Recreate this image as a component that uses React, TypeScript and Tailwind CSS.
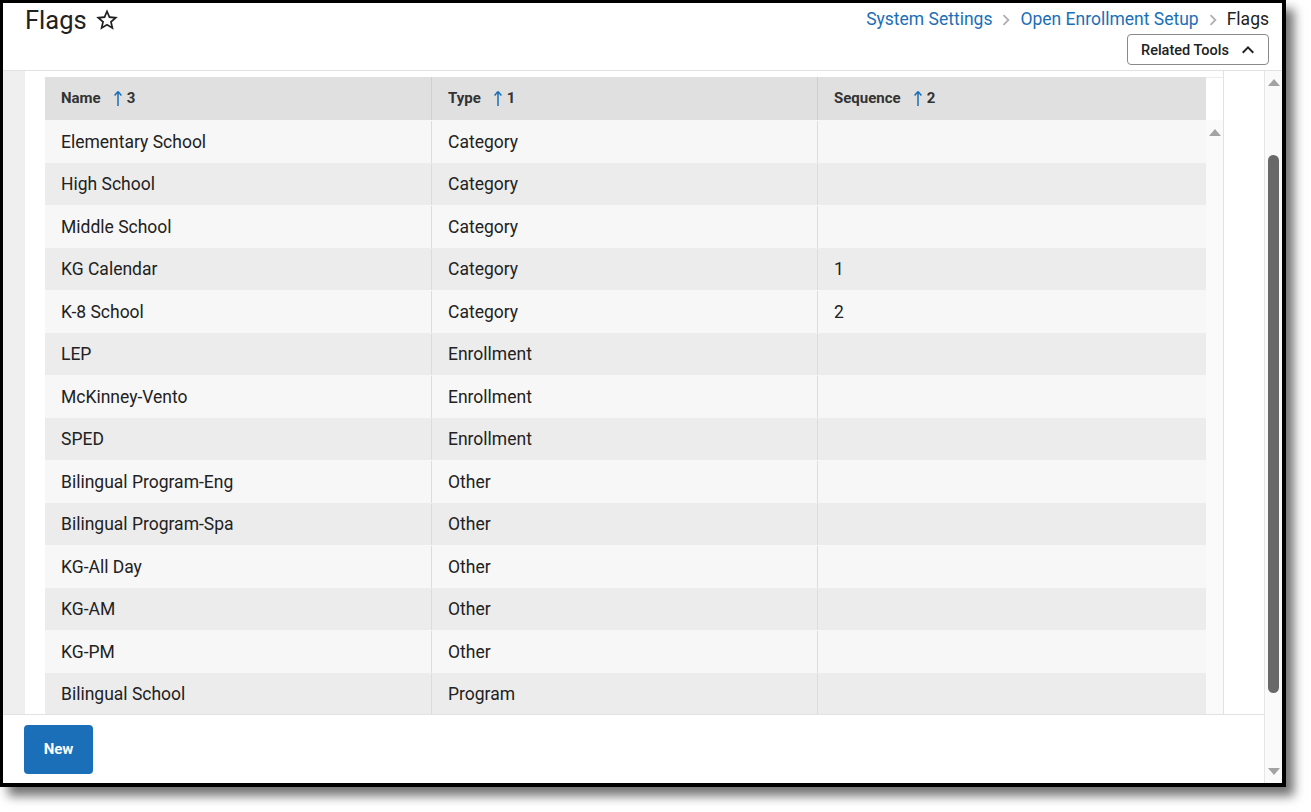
import React from "react";

const rows: [string, string, string][] = [
  ["Elementary School", "Category", ""],
  ["High School", "Category", ""],
  ["Middle School", "Category", ""],
  ["KG Calendar", "Category", "1"],
  ["K-8 School", "Category", "2"],
  ["LEP", "Enrollment", ""],
  ["McKinney-Vento", "Enrollment", ""],
  ["SPED", "Enrollment", ""],
  ["Bilingual Program-Eng", "Other", ""],
  ["Bilingual Program-Spa", "Other", ""],
  ["KG-All Day", "Other", ""],
  ["KG-AM", "Other", ""],
  ["KG-PM", "Other", ""],
  ["Bilingual School", "Program", ""],
];

function Chevron() {
  return (
    <svg width="22" height="22" viewBox="0 0 24 24" className="mx-[3px] mt-[2px]" fill="#b0b0b0">
      <path d="M8.59 16.59 13.17 12 8.59 7.41 10 6l6 6-6 6z" />
    </svg>
  );
}

function SortArrow() {
  return (
    <svg width="10" height="17" viewBox="0 0 10 17" className="ml-[12px] mr-[4px]">
      <path d="M5 1.5 L1.6 5.5 M5 1.5 L8.4 5.5 M5 1.5 L5 16" stroke="#1b6fb8" strokeWidth="1.5" fill="none" />
    </svg>
  );
}

function UpTri() {
  return (
    <svg width="12" height="7" viewBox="0 0 12 7">
      <path d="M0 7 L6 0 L12 7 Z" fill="#a3a3a3" />
    </svg>
  );
}
function DownTri() {
  return (
    <svg width="12" height="7" viewBox="0 0 12 7">
      <path d="M0 0 L6 7 L12 0 Z" fill="#a3a3a3" />
    </svg>
  );
}

export default function App() {
  return (
    <div
      className="w-[1311px] h-[812px] bg-white overflow-hidden"
      style={{ fontFamily: "Roboto, 'Liberation Sans', sans-serif" }}
    >
      <div className="w-[1286px] h-[787px] border-black border-l-[3px] border-t-[3px] border-r-[4px] border-b-[4px] shadow-[8px_9px_10px_rgba(0,0,0,0.55)] flex flex-col bg-white">
        {/* Header */}
        <div className="h-[68px] shrink-0 border-b border-[#e2e2e2] flex justify-between pl-[22px] pr-[13px]">
          <div className="flex items-center h-[33px] gap-[7px]">
            <span className="text-[25.5px] leading-[32px] text-[#222]">Flags</span>
            <svg width="26" height="26" viewBox="0 0 24 24" fill="#222">
              <path d="M22 9.24l-7.19-.62L12 2 9.19 8.63 2 9.24l5.46 4.73L5.82 21 12 17.27 18.18 21l-1.63-7.03L22 9.24zM12 15.4l-3.76 2.27 1-4.28-3.32-2.88 4.38-.38L12 6.1l1.71 4.04 4.38.38-3.32 2.88 1 4.28L12 15.4z" />
            </svg>
          </div>
          <div className="flex flex-col items-end pt-[4px]">
            <div className="flex items-center text-[17.5px] leading-[24px]">
              <span className="text-[#1b6fb8]">System Settings</span>
              <Chevron />
              <span className="text-[#1b6fb8]">Open Enrollment Setup</span>
              <Chevron />
              <span className="text-[#222]">Flags</span>
            </div>
            <button className="mt-[3px] h-[31px] w-[142px] border border-[#8a8a8a] rounded-[4px] flex items-center pl-[13px] pr-[8px] pt-[2px] justify-between text-[14.5px] font-medium text-[#222]">
              <span>Related Tools</span>
              <svg width="24" height="24" viewBox="0 0 24 24" fill="#222" className="-mt-[2px]">
                <path d="M12 8l-6 6 1.41 1.41L12 10.83l4.59 4.58L18 14z" />
              </svg>
            </button>
          </div>
        </div>

        {/* Body + footer + page scrollbar */}
        <div className="flex flex-1 min-h-0">
          <div className="flex flex-col flex-1 min-w-0">
            <div className="flex flex-1 min-h-0 bg-[#efefef]">
              <div className="w-[22px] shrink-0" />
              <div className="w-[1199px] shrink-0 bg-white border-r border-[#e2e2e2] pl-[20px] pt-[6px] flex flex-col min-h-0">
                {/* table header */}
                <div className="flex h-[43px] shrink-0">
                  <div className="flex flex-1 bg-[#e0e0e0] text-[15px] font-bold text-[#333]">
                    <div className="w-[387px] flex items-center pl-[16px] border-r border-[#cfcfcf]">
                      Name <SortArrow /> 3
                    </div>
                    <div className="w-[386px] flex items-center pl-[16px] border-r border-[#cfcfcf]">
                      Type <SortArrow /> 1
                    </div>
                    <div className="flex-1 flex items-center pl-[16px]">
                      Sequence <SortArrow /> 2
                    </div>
                  </div>
                  <div className="w-[17px] bg-white border-t border-[#ececec]" />
                </div>
                {/* table body */}
                <div className="flex flex-1 min-h-0 overflow-hidden">
                  <div className="flex-1 flex flex-col">
                    {rows.map((r, i) => (
                      <div
                        key={i}
                        className={`flex h-[42.5px] shrink-0 text-[17.5px] text-[#222] pt-[1px] ${i % 2 === 0 ? "bg-[#f7f7f7]" : "bg-[#ececec]"}`}
                      >
                        <div className="w-[387px] flex items-center pl-[16px] border-r border-[#dcdcdc]">{r[0]}</div>
                        <div className="w-[386px] flex items-center pl-[16px] border-r border-[#dcdcdc]">{r[1]}</div>
                        <div className="flex-1 flex items-center pl-[16px]">{r[2]}</div>
                      </div>
                    ))}
                  </div>
                  <div className="w-[17px] bg-[#fafafa] flex justify-center pt-[9px]">
                    <UpTri />
                  </div>
                </div>
              </div>
              <div className="flex-1 bg-white" />
            </div>
            {/* footer */}
            <div className="h-[69px] shrink-0 border-t border-[#e2e2e2] bg-white pl-[21px] pt-[10px]">
              <button className="w-[69px] h-[49px] rounded-[4px] bg-[#1b6fb8] text-white text-[15px] font-bold">
                New
              </button>
            </div>
          </div>
          {/* page scrollbar */}
          <div className="w-[18px] shrink-0 bg-[#fafafa] border-l border-[#e6e6e6] flex flex-col items-center pt-[8px] pb-[8px]">
            <UpTri />
            <div className="mt-[69px] w-[11px] h-[538px] rounded-full bg-[#696969]" />
            <div className="flex-1" />
            <DownTri />
          </div>
        </div>
      </div>
    </div>
  );
}
